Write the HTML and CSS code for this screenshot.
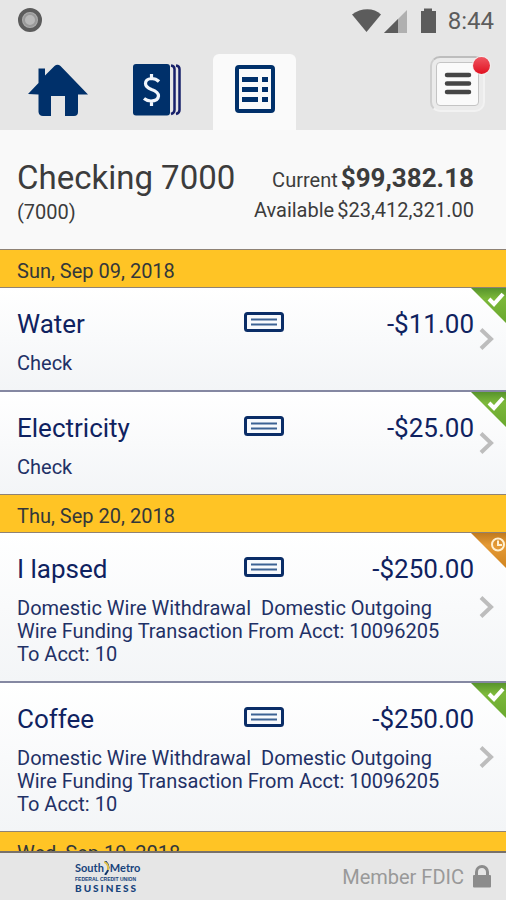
FILE: index.html
```html
<!DOCTYPE html>
<html lang="en">
<head>
<meta charset="utf-8">
<meta name="viewport" content="width=device-width, initial-scale=1">
<title>Checking 7000</title>
<link rel="stylesheet" href="styles.css">
</head>
<body>
<svg class="defs" width="0" height="0" aria-hidden="true">
  <defs>
    <linearGradient id="green" x1="0" y1="0" x2="0" y2="1"><stop offset="0" stop-color="#57932c"/><stop offset=".3" stop-color="#7cb83a"/><stop offset="1" stop-color="#69a82e"/></linearGradient>
    <linearGradient id="orange" x1="0" y1="0" x2="0" y2="1"><stop offset="0" stop-color="#c07a1e"/><stop offset=".35" stop-color="#e59a35"/><stop offset="1" stop-color="#d0841f"/></linearGradient>
    <symbol id="check-slip" viewBox="0 0 40 20"><rect x="1.5" y="1.5" width="37" height="17" rx="2" fill="#f8fafd" stroke="#0a2d67" stroke-width="3"/><path d="M7 7.5h26M7 12.5h26" stroke="#3c6294" stroke-width="2"/></symbol>
    <symbol id="chevron" viewBox="0 0 16 24"><path d="M2 2.500 12 12 2 21.500" fill="none" stroke="#bdbdbd" stroke-width="4"/></symbol>
    <symbol id="cleared" viewBox="0 0 35 35"><path d="M0 0h35v35z" fill="url(#green)"/><path d="M18 11l5 5 9-10" fill="none" stroke="#fff" stroke-width="4"/></symbol>
    <symbol id="pending" viewBox="0 0 35 35"><path d="M0 0h35v35z" fill="url(#orange)"/><circle cx="27" cy="11.500" r="6" fill="none" stroke="#fff0d0" stroke-width="2"/><path d="M27 7.500v4.500h4" fill="none" stroke="#fff0d0" stroke-width="2"/></symbol>
  </defs>
</svg>
<div class="app">
  <header class="top">
    <div class="status">
      <svg width="24" height="24" viewBox="0 0 24 24" aria-hidden="true"><circle cx="12" cy="12" r="10" fill="#adadad" stroke="#5c5c5c" stroke-width="4"/><circle cx="12" cy="12" r="6" fill="#b8b8b8" stroke="#999" stroke-width="2"/></svg>
      <div class="signals">
        <svg width="90" height="26" viewBox="0 0 90 26" aria-hidden="true">
          <path d="M0 7.500C9 .5 22 .5 29 7.500L14.500 25z" fill="#5c5c5c"/>
          <path d="M55 3v23H32z" fill="#b0b0b0"/><path d="M46 12v14H32z" fill="#5c5c5c"/>
          <path d="M69 4h3V1.500h8V4h4v22H69z" fill="#5c5c5c"/>
        </svg>
        <span class="clock">8:44</span>
      </div>
    </div>
    <nav class="tabs">
      <a class="tab" href="#home" aria-label="Home">
        <svg width="60" height="54" viewBox="0 0 60 54"><path d="M0 30 10.500 19V4.500H17v7L26.500 2Q29.500-.7 32.500 2L60 30.500H50V48Q50 52 46 52H37V32H23V52H15Q11 52 10.500 48V30.500z" fill="#00306a"/></svg>
      </a>
      <a class="tab" href="#accounts" aria-label="Accounts">
        <svg width="48" height="52" viewBox="0 0 48 52"><rect width="37" height="51.500" rx="3" fill="#00306a"/><path d="M38 1.500Q41.500 2 41.500 5V46Q41.500 49 38 50" fill="none" stroke="#17206a" stroke-width="2.500"/><path d="M43 1.500Q46.500 2 46.500 5V46Q46.500 49 43 50" fill="none" stroke="#17206a" stroke-width="2.500"/><path d="M26 17.500Q23 14.500 18.500 14.500Q12.500 15 12.500 19.500Q12.500 23 18.500 25.500Q25.500 28 25.500 32Q25 37 18 37Q14 37 11 34.500M18.500 10v5M18.500 36.500V42" fill="none" stroke="#f2f6fb" stroke-width="3.200"/></svg>
      </a>
      <a class="tab active" href="#transactions" aria-label="Transactions" aria-current="page">
        <svg width="40" height="48" viewBox="0 0 40 48"><rect x="2" y="2" width="36" height="44" rx="2" fill="#fafafa" stroke="#00306a" stroke-width="4"/><path d="M7 14.500h16M7 24.500h16M7 34.500h16M27 14.500h6M27 24.500h6M27 34.500h6" stroke="#00306a" stroke-width="5"/></svg>
      </a>
      <button class="menu" type="button" aria-label="Menu, new messages">
        <span class="menu-face"><svg width="28" height="24" viewBox="0 0 28 24"><path d="M3 3h22M3 11.500h22M3 20h22" stroke="#454545" stroke-width="4.500" stroke-linecap="round"/></svg></span>
        <span class="badge"></span>
      </button>
    </nav>
  </header>
  <section class="account">
    <div>
      <h1>Checking 7000</h1>
      <p>(7000)</p>
    </div>
    <div class="balances">
      <p><span>Current</span><strong>$99,382.18</strong></p>
      <p><span>Available</span><span>$23,412,321.00</span></p>
    </div>
  </section>
  <main class="list">
    <h2>Sun, Sep 09, 2018</h2>
    <ul>
      <li><a class="item" href="#water">
        <span class="name">Water</span><svg class="slip"><use href="#check-slip"/></svg><span class="amount">-$11.00</span>
        <span class="detail">Check</span>
        <svg class="chevron"><use href="#chevron"/></svg><svg class="corner"><use href="#cleared"/></svg>
      </a></li>
      <li><a class="item" href="#electricity">
        <span class="name">Electricity</span><svg class="slip"><use href="#check-slip"/></svg><span class="amount">-$25.00</span>
        <span class="detail">Check</span>
        <svg class="chevron"><use href="#chevron"/></svg><svg class="corner"><use href="#cleared"/></svg>
      </a></li>
    </ul>
    <h2>Thu, Sep 20, 2018</h2>
    <ul>
      <li><a class="item" href="#lapsed">
        <span class="name">I lapsed</span><svg class="slip"><use href="#check-slip"/></svg><span class="amount">-$250.00</span>
        <span class="detail">Domestic Wire Withdrawal&nbsp; Domestic Outgoing Wire Funding Transaction From Acct: 10096205 To Acct: 10</span>
        <svg class="chevron"><use href="#chevron"/></svg><svg class="corner"><use href="#pending"/></svg>
      </a></li>
      <li><a class="item" href="#coffee">
        <span class="name">Coffee</span><svg class="slip"><use href="#check-slip"/></svg><span class="amount">-$250.00</span>
        <span class="detail">Domestic Wire Withdrawal&nbsp; Domestic Outgoing Wire Funding Transaction From Acct: 10096205 To Acct: 10</span>
        <svg class="chevron"><use href="#chevron"/></svg><svg class="corner"><use href="#cleared"/></svg>
      </a></li>
    </ul>
    <h2>Wed, Sep 19, 2018</h2>
  </main>
  <footer class="footer">
    <div class="brand">
      <div class="brand-name"><span>South</span><svg width="6" height="14" viewBox="0 0 6 14" aria-hidden="true"><path d="M1 0Q8 6 1 14" fill="none" stroke="#10366c" stroke-width="2"/><path d="M0 1Q5 3 4 9" fill="none" stroke="#e5c44b" stroke-width="2"/></svg><span>Metro</span></div>
      <div class="brand-sub">FEDERAL CREDIT UNION</div>
      <div class="brand-unit">BUSINESS</div>
    </div>
    <div class="fdic">Member FDIC
      <svg width="18" height="23" viewBox="0 0 18 23" aria-hidden="true"><path d="M3.500 11V7a5.500 5.500 0 0 1 11 0v4" fill="none" stroke="#8c8c8c" stroke-width="3"/><rect y="10" width="18" height="12.500" rx="1" fill="#8c8c8c"/></svg>
    </div>
  </footer>
</div>
</body>
</html>
```
FILE: styles.css
```css
* { box-sizing: border-box; }
body { margin: 0; font-family: Roboto, "Liberation Sans", sans-serif; color: #3c3c3c; background: #f9f9f9; }
h1, h2, p, ul { margin: 0; padding: 0; font-weight: 400; }
ul { list-style: none; }
a { color: inherit; text-decoration: none; }
.defs { position: absolute; }
.app { display: flex; flex-direction: column; height: 100vh; overflow: hidden; }

.top { flex: none; background: #e6e6e6; }
.status { display: flex; justify-content: space-between; align-items: center; height: 40px; padding: 0 12px 0 18px; }
.signals { display: flex; align-items: center; gap: 6px; }
.clock { padding-top: 2px; font-size: 24px; line-height: 24px; color: #5c5c5c; }
.tabs { display: flex; align-items: flex-end; padding: 14px 21px 0 16px; }
.tab { display: flex; align-items: center; justify-content: center; flex: none; width: 83px; height: 76px; padding-bottom: 4px; }
.tab:first-child { padding-top: 2px; }
.tabs .tab + .tab { margin-left: 16px; }
.tabs .tab.active { margin-left: 15px; padding-bottom: 6px; border-radius: 6px 6px 0 0; background: #fafafa; }
.menu { position: relative; display: block; width: 55px; height: 56px; margin: 0 0 18px auto; padding: 4px; border: 2px solid #f2f2f2; border-top-color: #bdbdbd; border-left-color: #cfcfcf; border-radius: 10px; background: #ebebeb; }
.menu-face { display: flex; align-items: center; justify-content: center; height: 100%; border: 1px solid #c4c4c4; border-radius: 4px; background: #fafafa; }
.badge { position: absolute; top: -1px; right: -7px; width: 17px; height: 17px; border-radius: 50%; background: linear-gradient(#f05560, #e01020); box-shadow: 0 0 0 1px #f6eeee; }

.account { flex: none; display: flex; justify-content: space-between; height: 119px; padding: 29px 32px 0 17px; background: #f9f9f9; font-size: 20px; line-height: 30px; }
.account h1 { font-size: 33px; line-height: 38px; }
.balances { padding-top: 4px; }
.balances p { display: flex; justify-content: flex-end; align-items: baseline; gap: 3px; }
.balances strong { font-size: 26px; font-weight: 700; }

.list { flex: 1; min-height: 0; overflow: hidden; }
h2 { height: 39px; padding: 2px 17px 0; border: 1px solid #8f8275; border-width: 1px 0; background: #ffc425; color: #33373a; font-size: 20px; line-height: 39px; }
li + li { border-top: 2px solid #8588a2; }
.item { position: relative; display: grid; grid-template-columns: 6fr 40px 5fr; align-items: start; row-gap: 12px; padding: 20px 32px 15px 17px; background: linear-gradient(#ffffff, #f3f5f7); color: #0f2260; }
.name, .amount { font-size: 26px; line-height: 32px; }
.amount { text-align: right; }
.slip { width: 40px; height: 20px; margin-top: 4px; }
.detail { grid-column: 1 / -1; padding-right: 20px; font-size: 20px; line-height: 23px; color: #1f3166; }
.chevron { position: absolute; right: 11px; top: 50%; width: 16px; height: 24px; margin-top: -12px; }
.corner { position: absolute; top: 0; right: 0; width: 35px; height: 35px; }

.footer { flex: none; display: flex; justify-content: space-between; align-items: center; height: 49px; padding: 0 15px 0 75px; border-top: 2px solid #78716a; background: #e6e6e6; }
.brand { color: #17437c; font-family: Lato, "Liberation Sans", sans-serif; font-weight: 700; }
.brand-name { display: flex; align-items: center; font-size: 11px; line-height: 14px; }
.brand-sub { font-family: "Liberation Sans", sans-serif; font-size: 5px; line-height: 8px; }
.brand-unit { font-size: 10px; font-weight: 900; line-height: 10px; letter-spacing: 2px; }
.fdic { display: flex; align-items: center; gap: 9px; color: #999; font-size: 20px; line-height: 24px; }
```
